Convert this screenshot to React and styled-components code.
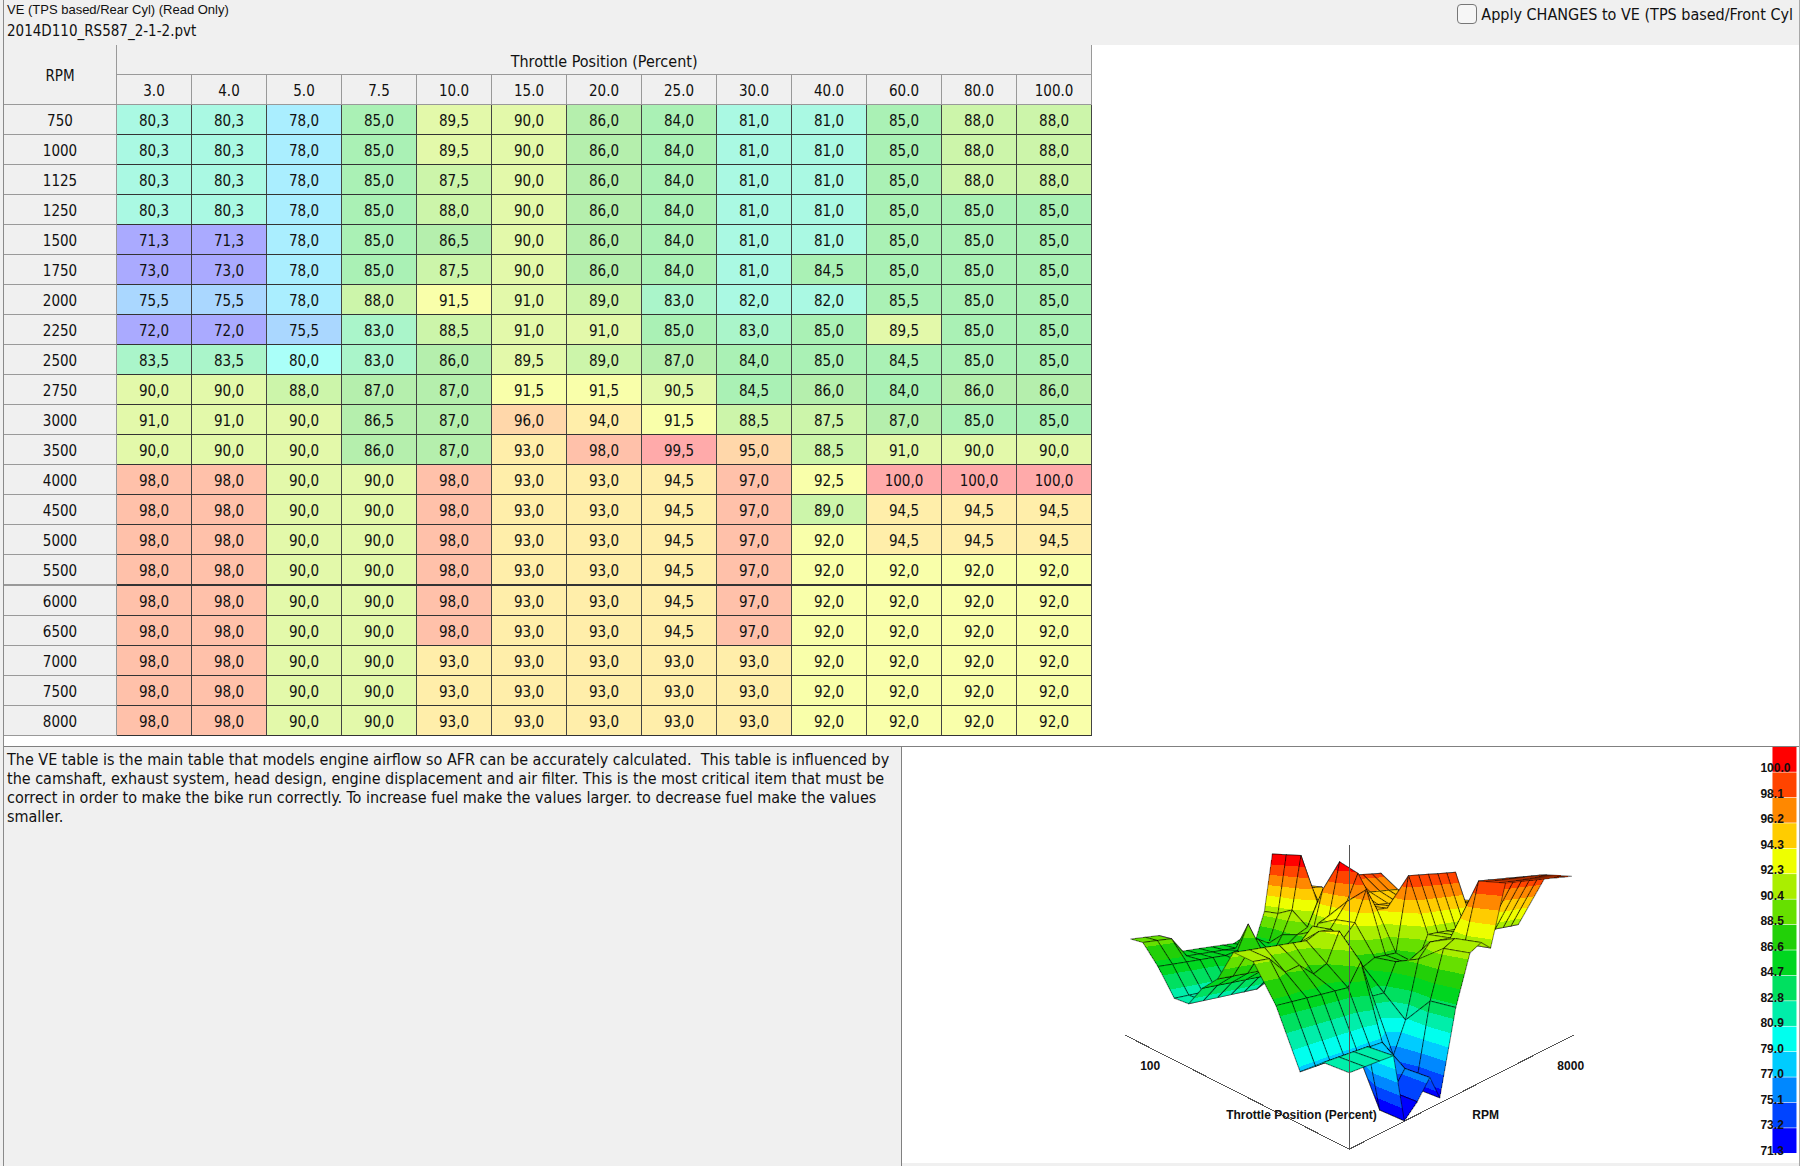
import React from 'react'
import styled, { createGlobalStyle } from 'styled-components'

const throttle = ['3.0', '4.0', '5.0', '7.5', '10.0', '15.0', '20.0', '25.0', '30.0', '40.0', '60.0', '80.0', '100.0']

const rows = [
  [750, 80.3, 80.3, 78, 85, 89.5, 90, 86, 84, 81, 81, 85, 88, 88],
  [1000, 80.3, 80.3, 78, 85, 89.5, 90, 86, 84, 81, 81, 85, 88, 88],
  [1125, 80.3, 80.3, 78, 85, 87.5, 90, 86, 84, 81, 81, 85, 88, 88],
  [1250, 80.3, 80.3, 78, 85, 88, 90, 86, 84, 81, 81, 85, 85, 85],
  [1500, 71.3, 71.3, 78, 85, 86.5, 90, 86, 84, 81, 81, 85, 85, 85],
  [1750, 73, 73, 78, 85, 87.5, 90, 86, 84, 81, 84.5, 85, 85, 85],
  [2000, 75.5, 75.5, 78, 88, 91.5, 91, 89, 83, 82, 82, 85.5, 85, 85],
  [2250, 72, 72, 75.5, 83, 88.5, 91, 91, 85, 83, 85, 89.5, 85, 85],
  [2500, 83.5, 83.5, 80, 83, 86, 89.5, 89, 87, 84, 85, 84.5, 85, 85],
  [2750, 90, 90, 88, 87, 87, 91.5, 91.5, 90.5, 84.5, 86, 84, 86, 86],
  [3000, 91, 91, 90, 86.5, 87, 96, 94, 91.5, 88.5, 87.5, 87, 85, 85],
  [3500, 90, 90, 90, 86, 87, 93, 98, 99.5, 95, 88.5, 91, 90, 90],
  [4000, 98, 98, 90, 90, 98, 93, 93, 94.5, 97, 92.5, 100, 100, 100],
  [4500, 98, 98, 90, 90, 98, 93, 93, 94.5, 97, 89, 94.5, 94.5, 94.5],
  [5000, 98, 98, 90, 90, 98, 93, 93, 94.5, 97, 92, 94.5, 94.5, 94.5],
  [5500, 98, 98, 90, 90, 98, 93, 93, 94.5, 97, 92, 92, 92, 92],
  [6000, 98, 98, 90, 90, 98, 93, 93, 94.5, 97, 92, 92, 92, 92],
  [6500, 98, 98, 90, 90, 98, 93, 93, 94.5, 97, 92, 92, 92, 92],
  [7000, 98, 98, 90, 90, 93, 93, 93, 93, 93, 92, 92, 92, 92],
  [7500, 98, 98, 90, 90, 93, 93, 93, 93, 93, 92, 92, 92, 92],
  [8000, 98, 98, 90, 90, 93, 93, 93, 93, 93, 92, 92, 92, 92],
]

// lowest band first
const bands = [
  [0, 0, 255], [0, 68, 255], [0, 136, 255], [0, 204, 255],
  [0, 255, 238], [0, 238, 170], [0, 224, 96], [0, 214, 32],
  [34, 208, 8], [102, 224, 0], [170, 238, 0], [238, 255, 0],
  [255, 204, 0], [255, 136, 0], [255, 68, 0], [255, 0, 0],
]
const MIN = 71.3
const MAX = 100
const STEP = (MAX - MIN) / bands.length

const bandOf = (v) => Math.max(0, Math.min(bands.length - 1, Math.floor((v - MIN) / STEP)))
const solid = (b) => `rgb(${bands[b].join(',')})`
const pastel = (v) => `rgb(${bands[bandOf(v)].map((c) => Math.round(c / 3 + 170)).join(',')})`
const show = (v) => v.toFixed(1).replace('.', ',')

// perspective view of the surface, r = rpm axis, t = throttle axis (both 0..1)
const project = ([r, t, v]) => {
  const z = v - MIN
  const w = 1 + 0.5 * (r + t) - 0.0051 * z
  const x = 448 + (303 * r - 309 * t) / w
  const y = (1148 + 418 * r + 412 * t - 13.95 * z) / w - 746
  return `${x.toFixed(1)},${y.toFixed(1)}`
}

// keeps the part of a polygon whose value is above (side 1) or below (side -1) a level
const clip = (poly, level, side) => {
  const out = []
  poly.forEach((a, i) => {
    const b = poly[(i + 1) % poly.length]
    const da = (a[2] - level) * side
    const db = (b[2] - level) * side
    if (da >= 0) out.push(a)
    if ((da > 0 && db < 0) || (da < 0 && db > 0)) {
      const k = da / (da - db)
      out.push(a.map((n, j) => n + (b[j] - n) * k))
    }
  })
  return out
}

const buildSurface = () => {
  const cells = []
  const rMax = rows.length - 1
  const tMax = throttle.length - 1
  const at = (i, j) => [i / rMax, j / tMax, rows[i][j + 1]]
  for (let i = 0; i < rMax; i++) {
    for (let j = 0; j < tMax; j++) {
      const quad = [at(i, j), at(i + 1, j), at(i + 1, j + 1), at(i, j + 1)]
      const values = quad.map((p) => p[2])
      const parts = []
      for (let b = bandOf(Math.min(...values)); b <= bandOf(Math.max(...values)); b++) {
        let poly = quad
        if (b > 0) poly = clip(poly, MIN + b * STEP, 1)
        if (b < bands.length - 1) poly = clip(poly, MIN + (b + 1) * STEP, -1)
        if (poly.length > 2) parts.push({ b, points: poly.map(project).join(' ') })
      }
      cells.push({ key: `${i}-${j}`, depth: i / rMax + j / tMax, parts, outline: quad.map(project).join(' ') })
    }
  }
  return cells.sort((a, b) => b.depth - a.depth)
}

const surface = buildSurface()
const scale = ['100.0', '98.1', '96.2', '94.3', '92.3', '90.4', '88.5', '86.6', '84.7', '82.8', '80.9', '79.0', '77.0', '75.1', '73.2', '71.3']

const SurfaceChart = () => {
  return (
    <Chart viewBox="1 0 897 416" role="img" aria-label="VE surface">
      {surface.map((cell) => (
        <g key={cell.key}>
          {cell.parts.map((p) => (
            <polygon key={p.b} points={p.points} fill={solid(p.b)} shapeRendering="crispEdges" />
          ))}
          <polygon points={cell.outline} fill="none" stroke="#000" strokeOpacity="0.5" strokeLinejoin="round" />
        </g>
      ))}
      <path d="M448.5 98V402M448 402L224 288M448 402L672 288" fill="none" stroke="#555" shapeRendering="crispEdges" />
      <text x="239" y="323">100</text>
      <text x="656" y="323">8000</text>
      <text x="325" y="372">Throttle Position (Percent)</text>
      <text x="571" y="372">RPM</text>
      {scale.map((label, i) => (
        <rect key={label} x="871" y={i * 25.4} width="24" height="24.8" fill={solid(15 - i)} />
      ))}
      {scale.map((label, i) => (
        <text key={label} x="859" y={Math.round(i * 25.5) + 25}>{label}</text>
      ))}
    </Chart>
  )
}

const App = () => {
  return (
    <Window>
      <GlobalStyle />
      <Header>
        <div>
          <Title>VE (TPS based/Rear Cyl) (Read Only)</Title>
          <FileName>2014D110_RS587_2-1-2.pvt</FileName>
        </div>
        <Apply>
          <input type="checkbox" />
          Apply CHANGES to VE (TPS based/Front Cyl
        </Apply>
      </Header>
      <TableArea>
        <Table>
          <colgroup>
            <col className="rpm" />
            {throttle.map((t) => <col key={t} />)}
          </colgroup>
          <thead>
            <tr>
              <HeadCell rowSpan={2}>RPM</HeadCell>
              <HeadCell colSpan={13} $large>Throttle Position (Percent)</HeadCell>
            </tr>
            <tr>
              {throttle.map((t) => <HeadCell key={t} scope="col">{t}</HeadCell>)}
            </tr>
          </thead>
          <tbody>
            {rows.map(([rpm, ...values]) => (
              <Row key={rpm} $thick={rpm === 5500}>
                <HeadCell scope="row">{rpm}</HeadCell>
                {values.map((v, i) => <Cell key={i} $color={pastel(v)}>{show(v)}</Cell>)}
              </Row>
            ))}
          </tbody>
        </Table>
      </TableArea>
      <Bottom>
        <Notes>
          The VE table is the main table that models engine airflow so AFR can be accurately calculated.&nbsp; This table is influenced by the camshaft, exhaust system, head design, engine displacement and air filter. This is the most critical item that must be correct in order to make the bike run correctly. To increase fuel make the values larger. to decrease fuel make the values smaller.
        </Notes>
        <ChartPanel>
          <SurfaceChart />
        </ChartPanel>
      </Bottom>
    </Window>
  )
}

export default App

const GlobalStyle = createGlobalStyle`
*{
  box-sizing:border-box;
}
body{
  margin:0;
  background:#f0f0f0;
  color:#111;
  font-family:"DejaVu Sans Condensed", "Noto Sans", sans-serif;
  font-size:15px;
}
`
const Window = styled.div`
display:flex;
flex-direction:column;
min-height:100vh;
margin-left:3px;
border-left:1px solid #8a8a8a;
border-right:1px solid #a8a8a8;
`
const Header = styled.header`
display:flex;
justify-content:space-between;
height:45px;
padding:0 6px 0 3px;
`
const Title = styled.div`
font-family:"Liberation Sans", Arial, sans-serif;
font-size:13px;
line-height:20px;
`
const FileName = styled.div`
line-height:22px;
`
const Apply = styled.label`
display:flex;
align-items:center;
gap:4px;
height:28px;
font-size:16px;
white-space:nowrap;

input{
  appearance:none;
  width:20px;
  height:20px;
  margin:0;
  border:1px solid #777;
  border-radius:4px;
  background:#f6f6f6;
}
`
const TableArea = styled.main`
padding-bottom:10px;
background:#fff;
border-bottom:1px solid #808080;
`
const Table = styled.table`
width:1088px;
table-layout:fixed;
border-collapse:separate;
border-spacing:0;
text-align:center;

col{
  width:75px;
}
col.rpm{
  width:113px;
}
`
const HeadCell = styled.th`
height:30px;
padding:3px 0 0;
font-size:${(p) => (p.$large ? '16px' : '15px')};
font-weight:normal;
background:#f0f0f0;
border-right:1px solid #999;
border-bottom:1px solid #999;
`
const Cell = styled.td`
height:30px;
padding:3px 0 0;
background:${(p) => p.$color};
border-right:1px solid #444;
border-bottom:1px solid #333;
`
const Row = styled.tr`
th, td{
  height:${(p) => (p.$thick ? '31px' : '30px')};
  border-bottom-width:${(p) => (p.$thick ? '2px' : '1px')};
}
`
const Bottom = styled.div`
display:grid;
grid-template-columns:1fr 1fr;
flex:1;
`
const Notes = styled.p`
margin:0;
padding:3px 4px 0 3px;
font-size:16px;
line-height:19px;
border-right:1px solid #808080;
`
const ChartPanel = styled.section`
margin-bottom:4px;
background:#fff;
`
const Chart = styled.svg`
display:block;
width:100%;

text{
  font-family:"Liberation Sans", Arial, sans-serif;
  font-size:12px;
  font-weight:bold;
  fill:#111;
}
`
